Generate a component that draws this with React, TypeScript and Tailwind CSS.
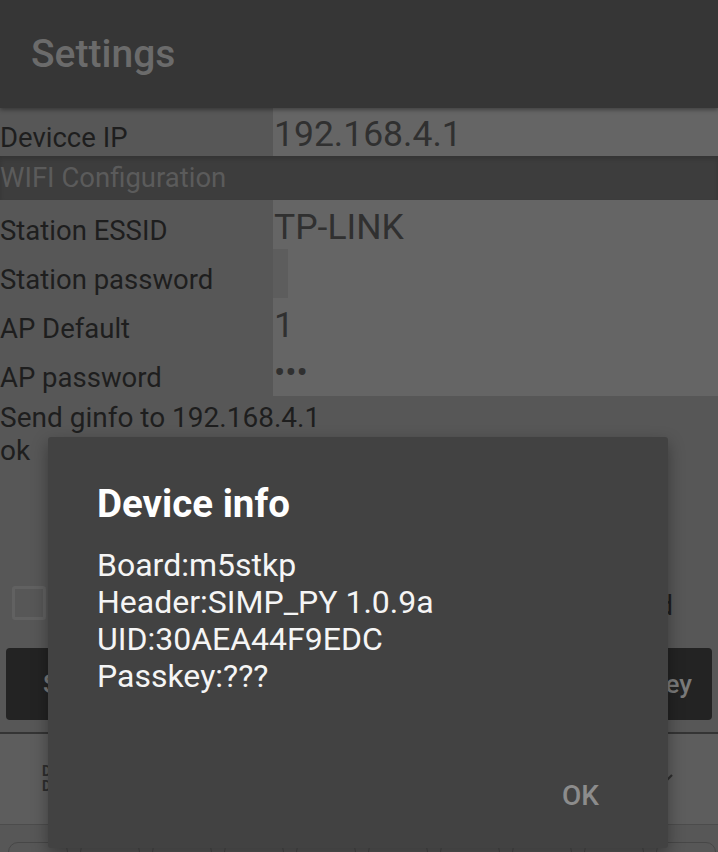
import React from "react";

function Row({
  label,
  value,
  h = "h-[49px]",
  split = false,
}: {
  label: string;
  value: React.ReactNode;
  h?: string;
  split?: boolean;
}) {
  return (
    <div className={`flex ${h}`}>
      <div className="w-[273px] shrink-0 flex items-end pb-[5px] text-[27.5px] leading-none text-[#1e1e1e] whitespace-nowrap">
        {label}
      </div>
      {split ? (
        <div className="flex-1 flex">
          <div className="w-[15px] bg-[#5d5d5d]" />
          <div className="flex-1 bg-[#656565]" />
        </div>
      ) : (
        <div className="flex-1 bg-[#656565] flex items-end pb-[4px] pl-[1px] text-[35.5px] leading-none text-[#303030] whitespace-nowrap">
          {value}
        </div>
      )}
    </div>
  );
}

export default function App() {
  return (
    <div className="relative w-[718px] h-[852px] overflow-hidden bg-[#575757] font-[family-name:Roboto,sans-serif]">
      {/* Header */}
      <div className="relative z-10 h-[108px] bg-[#363636] pl-[31px] pt-[35px] shadow-[0_2px_4px_rgba(0,0,0,0.35)]">
        <div className="text-[39px] leading-none font-medium text-[#6b6b6b]">Settings</div>
      </div>

      {/* Form rows */}
      <Row label="Devicce IP" value="192.168.4.1" h="h-[48px]" />
      <div className="h-[44px] bg-[#3d3d3d] flex items-end pb-[9px] text-[27.5px] leading-none text-[#5b5b5b] shadow-[inset_0_3px_4px_rgba(0,0,0,0.15)]">
        WIFI Configuration
      </div>
      <Row label="Station ESSID" value="TP-LINK" />
      <Row label="Station password" value="" split />
      <Row label="AP Default" value="1" />
      <Row
        label="AP password"
        value={<span className="text-[33.5px] pb-[3px]">•••</span>}
      />

      {/* Log text */}
      <div className="mt-[5px] text-[28px] leading-[33px] text-[#1e1e1e]">
        <div>Send ginfo to 192.168.4.1</div>
        <div>ok</div>
      </div>

      {/* Checkbox row */}
      <div className="mt-[119px] flex items-end justify-between pl-[12px] pr-[45px]">
        <div className="w-[34px] h-[34px] rounded-[3px] border-[3px] border-[#616161]" />
        <div className="pb-[1px] text-[27.5px] leading-none text-[#1e1e1e]">Show advanced</div>
      </div>

      {/* Buttons */}
      <div className="mt-[28px] flex gap-[10px] px-[6px] h-[72px]">
        <div className="flex-1 rounded-[4px] bg-[#232323] flex items-center pl-[37px] text-[26px] font-medium text-[#7a7a7a]">
          Save
        </div>
        <div className="flex-1 rounded-[4px] bg-[#232323] flex items-center justify-end pr-[20px] text-[26px] font-medium text-[#7a7a7a]">
          Set Passkey
        </div>
      </div>

      {/* Bottom bar */}
      <div className="mt-[12px] h-[2px] bg-[#343434]" />
      <div className="h-[91px] bg-[#5d5d5d] flex items-center justify-between pl-[42px] pr-[44px] border-b border-[#4c4c4c]">
        <div className="text-[14px] leading-[15px] font-bold text-[#2e2e2e]">
          <div>Data</div>
          <div>Dump</div>
        </div>
        <svg width="18" height="12" viewBox="0 0 18 12">
          <polyline points="2,2 9,9 16,2" fill="none" stroke="#2e2e2e" strokeWidth="2.2" />
        </svg>
      </div>
      <div className="mt-[17px] flex gap-[12px] pl-[8px]">
        {Array.from({ length: 10 }).map((_, i) => (
          <div key={i} className="w-[60px] h-[30px] shrink-0 rounded-t-[10px] border border-[#474747]" />
        ))}
      </div>

      {/* Dialog */}
      <div className="absolute left-[48px] top-[437px] w-[620px] h-[411px] rounded-[3px] bg-[#424242] shadow-[0_6px_16px_rgba(0,0,0,0.35)] flex flex-col">
        <div className="pt-[48px] pl-[49px] text-[38.5px] leading-none font-bold text-white">Device info</div>
        <div className="mt-[23px] pl-[49px] text-[32px] leading-[37.3px] text-[#f5f5f5]">
          <div>Board:m5stkp</div>
          <div>Header:SIMP_PY 1.0.9a</div>
          <div>UID:30AEA44F9EDC</div>
          <div>Passkey:???</div>
        </div>
        <div className="mt-auto flex justify-end pr-[69px] pb-[38px]">
          <div className="text-[28px] leading-none font-medium text-[#8c8c8c]">OK</div>
        </div>
      </div>
    </div>
  );
}
